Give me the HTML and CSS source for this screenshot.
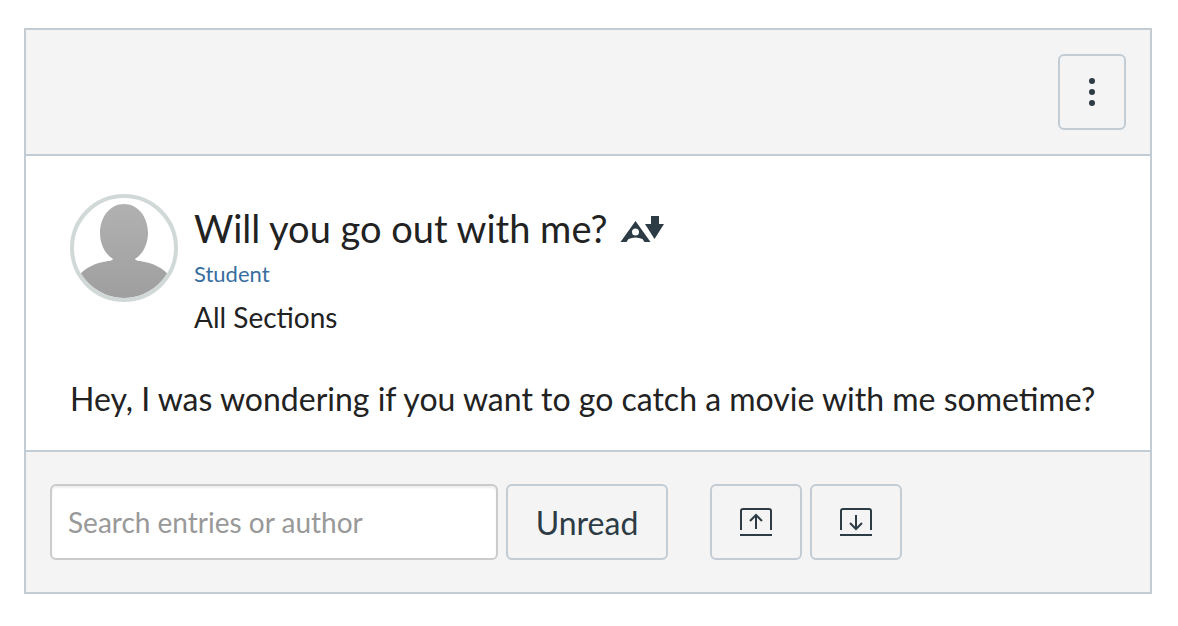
FILE: index.html
```html
<!DOCTYPE html>
<html lang="en">
<head>
    <meta charset="UTF-8">
    <meta name="viewport" content="width=device-width, initial-scale=1.0">
    <title>Discussion</title>
    <link rel="stylesheet" href="styles.css">
</head>
<body>
    <main class="discussion">
        <header class="toolbar">
            <button class="btn menu-btn" type="button" aria-label="Manage discussion">
                <svg width="8" height="30" viewBox="0 0 8 30"><circle cx="4" cy="4" r="3"/><circle cx="4" cy="15" r="3"/><circle cx="4" cy="26" r="3"/></svg>
            </button>
        </header>
        <article class="entry">
            <div class="entry-header">
                <svg class="avatar" viewBox="0 0 108 108" aria-hidden="true">
                    <defs>
                        <clipPath id="avatar-clip"><circle cx="54" cy="54" r="50"/></clipPath>
                        <linearGradient id="avatar-fill" x1="0" y1="0" x2="0" y2="1">
                            <stop offset="0" stop-color="#b1b1b1"/>
                            <stop offset="1" stop-color="#9e9e9e"/>
                        </linearGradient>
                    </defs>
                    <path clip-path="url(#avatar-clip)" fill="url(#avatar-fill)" d="M54 10C68 10 78 23 78 39C78 50 73 60 65 65Q66 67 70 67C83 69 94 74 100 83V108H8V83C14 74 25 69 38 67Q42 67 43 65C35 60 30 50 30 39C30 23 40 10 54 10Z"/>
                    <circle cx="54" cy="54" r="52" fill="none" stroke="#d1d9d8" stroke-width="4"/>
                </svg>
                <div class="entry-info">
                    <h1 class="title">Will you go out with me?
                        <svg class="title-icon" width="46" height="28" viewBox="0 0 46 28" aria-hidden="true"><path fill-rule="evenodd" d="M15.500 7L30.500 28H24.500L22.500 25Q15.500 22 8.500 25L6.500 28H.5ZM15.500 14.500A3.500 3.500 0 1 0 15.500 21.500A3.500 3.500 0 1 0 15.500 14.500Z"/><path d="M31 2H39V10H44L34.500 25L25 10H31Z"/></svg>
                    </h1>
                    <a class="author" href="#">Student</a>
                    <div class="sections">All Sections</div>
                </div>
            </div>
            <p class="message">Hey, I was wondering if you want to go catch a movie with me sometime?</p>
        </article>
        <footer class="filters">
            <input class="search" type="text" placeholder="Search entries or author" aria-label="Search entries or author">
            <button class="btn unread-btn" type="button">Unread</button>
            <div class="view-buttons">
                <button class="btn view-btn" type="button" aria-label="Collapse replies">
                    <svg width="34" height="30" viewBox="0 0 34 30"><path d="M2 23V4Q2 2 4 2H30Q32 2 32 4V23M1 28H33M17 22V8M11 14L17 8L23 14"/></svg>
                </button>
                <button class="btn view-btn" type="button" aria-label="Expand replies">
                    <svg width="34" height="30" viewBox="0 0 34 30"><path d="M2 23V4Q2 2 4 2H30Q32 2 32 4V23M1 28H33M17 8V22M11 16L17 22L23 16"/></svg>
                </button>
            </div>
        </footer>
    </main>
</body>
</html>
```
FILE: styles.css
```css
* {
    box-sizing: border-box;
}
body {
    margin: 28px 26px 32px 24px;
    font-family: Lato, "Liberation Sans", sans-serif;
    color: #222;
    background-color: #fff;
}
.discussion {
    border: 2px solid #c3ccd3;
}
.toolbar {
    display: flex;
    justify-content: flex-end;
    padding: 24px;
    background-color: #f4f4f4;
    border-bottom: 2px solid #c3ccd3;
}
.btn {
    display: flex;
    align-items: center;
    justify-content: center;
    height: 76px;
    padding: 0;
    font-family: inherit;
    font-size: 32px;
    color: #2d3b45;
    background-color: #f4f4f4;
    border: 2px solid #c3ccd3;
    border-radius: 6px;
    cursor: pointer;
}
.menu-btn {
    width: 68px;
}
.menu-btn svg {
    fill: #2d3b45;
}
.entry {
    padding: 38px 44px 27px;
}
.entry-header {
    display: flex;
    gap: 16px;
}
.avatar {
    width: 108px;
    height: 108px;
}
.entry-info {
    padding-top: 12px;
}
.title {
    display: flex;
    align-items: center;
    gap: 12px;
    margin: 0 0 4px;
    font-size: 38px;
    font-weight: 400;
    line-height: 44px;
}
.title-icon {
    fill: #2d3b45;
}
.author {
    display: block;
    font-size: 22px;
    line-height: 40px;
    color: #386e9f;
    text-decoration: none;
}
.sections {
    font-size: 28px;
    line-height: 46px;
}
.message {
    margin: 35px 0 0;
    font-size: 32px;
    line-height: 48px;
}
.filters {
    display: flex;
    padding: 32px 24px;
    background-color: #f4f4f4;
    border-top: 2px solid #c3ccd3;
}
.search {
    width: 448px;
    height: 76px;
    padding: 0 16px;
    font-family: inherit;
    font-size: 28px;
    color: #222;
    background-color: #fff;
    border: 2px solid #c9cbcc;
    border-radius: 6px;
    box-shadow: inset 0 2px 2px rgba(0, 0, 0, 0.07);
}
.search::placeholder {
    color: #999;
}
.unread-btn {
    width: 162px;
    margin-left: 8px;
}
.view-buttons {
    display: flex;
    gap: 8px;
    margin-left: 42px;
}
.view-btn {
    width: 92px;
}
.view-btn svg {
    fill: none;
    stroke: #2d3b45;
    stroke-width: 2;
}
```
